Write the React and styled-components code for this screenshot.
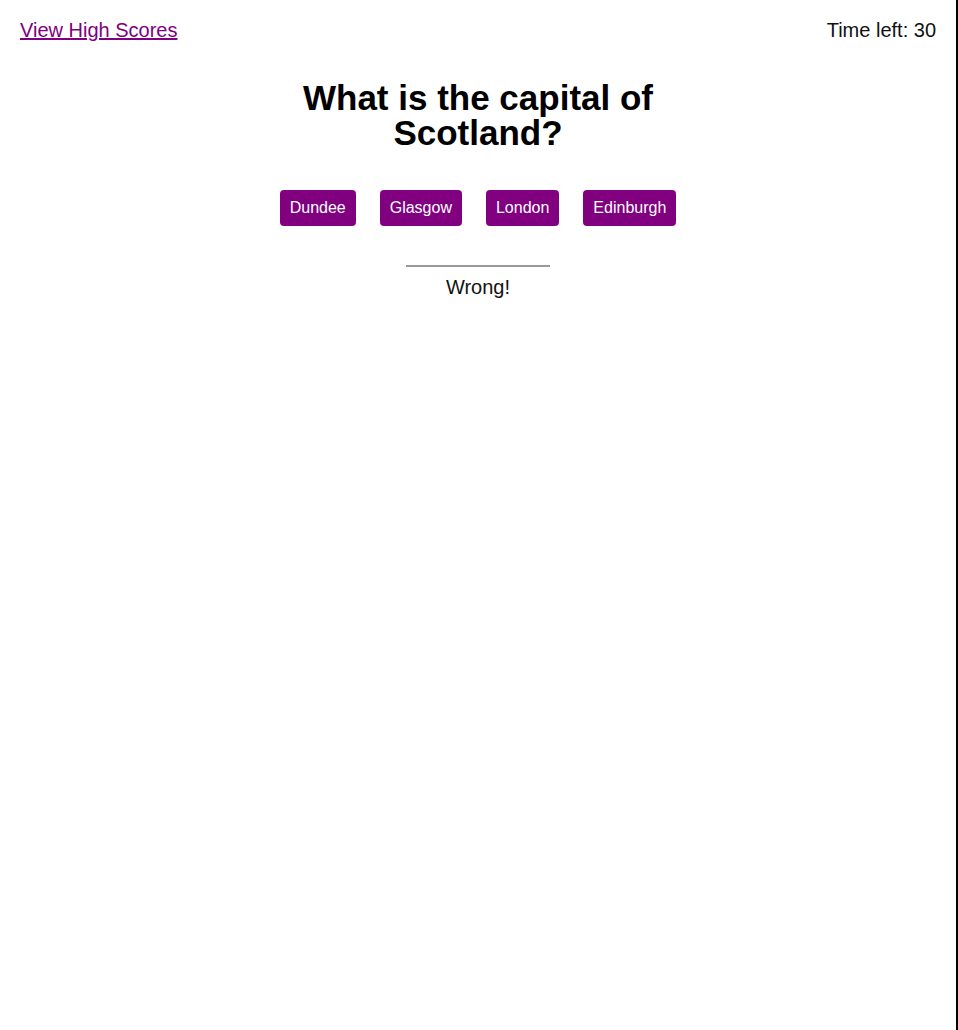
import React from "react";
import styled, { createGlobalStyle } from "styled-components";

const Global = createGlobalStyle`
  html, body { margin: 0; padding: 0; background: #fff; }
  body { font-family: "Liberation Sans", Arial, sans-serif; color: #111; }
`;

const Page = styled.div`
  width: 956px;
  min-height: 1030px;
  border-right: 2px solid #000;
  box-sizing: content-box;
`;

const Header = styled.header`
  display: flex;
  justify-content: space-between;
  align-items: center;
  padding: 18px 20px 0 20px;
  font-size: 20px;
  line-height: 24px;
`;

const Link = styled.a`
  color: #800080;
  text-decoration: underline;
`;

const Timer = styled.span`
  color: #111;
`;

const Main = styled.main`
  display: flex;
  flex-direction: column;
  align-items: center;
`;

const Question = styled.h1`
  margin: 38px 0 0;
  max-width: 400px;
  text-align: center;
  font-size: 35px;
  line-height: 35px;
  font-weight: bold;
  color: #000;
`;

const Choices = styled.div`
  display: flex;
  gap: 24px;
  margin-top: 40px;
`;

const Choice = styled.button`
  height: 36px;
  padding: 0 10px;
  border: none;
  border-radius: 4px;
  background: #800080;
  color: #fff;
  font-family: "Liberation Sans", Arial, sans-serif;
  font-size: 16px;
  cursor: pointer;
`;

const Feedback = styled.div`
  margin-top: 39px;
  width: 144px;
  border-top: 2px solid #999;
  text-align: center;
  font-size: 20px;
  line-height: 24px;
  padding-top: 8px;
  color: #111;
  white-space: nowrap;
  display: flex;
  justify-content: center;
`;

export default function App() {
  const choices = ["Dundee", "Glasgow", "London", "Edinburgh"];
  return (
    <>
      <Global />
      <Page>
        <Header>
          <Link href="#">View High Scores</Link>
          <Timer>Time left: 30</Timer>
        </Header>
        <Main>
          <Question>What is the capital of Scotland?</Question>
          <Choices>
            {choices.map((c) => (
              <Choice key={c}>{c}</Choice>
            ))}
          </Choices>
          <Feedback>Wrong!</Feedback>
        </Main>
      </Page>
    </>
  );
}
